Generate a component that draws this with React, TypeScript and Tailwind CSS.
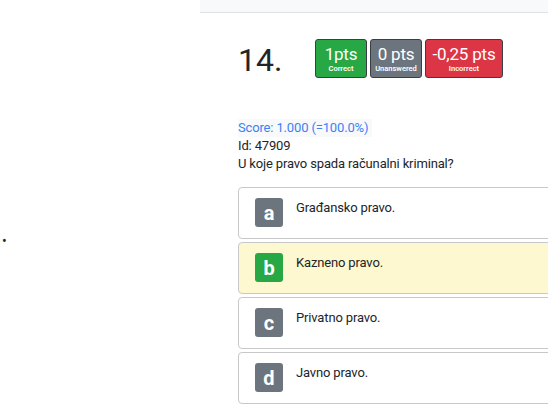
import React from 'react';

const options = [
  { letter: 'a', text: 'Građansko pravo.', correct: false },
  { letter: 'b', text: 'Kazneno pravo.', correct: true },
  { letter: 'c', text: 'Privatno pravo.', correct: false },
  { letter: 'd', text: 'Javno pravo.', correct: false },
];

const Badge = ({ value, label, className }: { value: string; label: string; className: string }) => (
  <div className={`flex flex-col items-center justify-center h-[39px] rounded-[3px] border border-[#3a3f44] text-white whitespace-nowrap ${className}`}>
    <span className="text-[17px] leading-[20px] tracking-[-0.2px]">{value}</span>
    <span className="text-[7.5px] leading-[10px] font-semibold">{label}</span>
  </div>
);

const App = () => {
  return (
    <div className="flex w-[548px] h-[417px] overflow-hidden bg-white text-[#212529]" style={{ fontFamily: 'Roboto, "Open Sans", sans-serif' }}>
      {/* Sidebar */}
      <div className="w-[200px] shrink-0 pt-[229px] pl-[2px]">
        <span className="text-[14px]">•</span>
      </div>

      {/* Main */}
      <div className="flex-1 min-w-0">
        <div className="h-[13px] bg-[#f8f9fa] border-b border-[#dee2e6]" />
        <div className="pl-[38px] pt-[26px]">
          <div className="flex items-start">
            <h1 className="w-[77px] text-[32px] leading-[40px] pt-[1px]">14.</h1>
            <div className="flex gap-[3px]">
              <Badge value="1pts" label="Correct" className="w-[52px] bg-[#28a745]" />
              <Badge value="0 pts" label="Unanswered" className="w-[52px] bg-[#6c757d]" />
              <Badge value="-0,25 pts" label="Incorrect" className="w-[78px] bg-[#dc3545]" />
            </div>
          </div>

          <div className="mt-[39px] text-[13px] leading-[18px] tracking-[-0.15px]">
            <div className="inline-block bg-[#f8f9fa] text-[#3b82f6] pr-1">Score: 1.000 (=100.0%)</div>
            <div>Id: 47909</div>
            <div>U koje pravo spada računalni kriminal?</div>
          </div>

          <div className="mt-[14px] flex flex-col gap-[3px] w-[340px]">
            {options.map((o) => (
              <div
                key={o.letter}
                className={`h-[52px] flex items-start pl-[16px] pt-[10px] border border-[#c8c8c8] rounded-[4px] ${o.correct ? 'bg-[#fdf8d0]' : 'bg-white'}`}
              >
                <div className={`w-[28px] h-[29px] rounded-[3px] flex items-center justify-center text-white font-bold text-[20px] ${o.correct ? 'bg-[#28a745]' : 'bg-[#6c757d]'}`}>
                  {o.letter}
                </div>
                <span className="ml-[13px] pt-[1px] text-[13px] leading-[18px] tracking-[-0.15px]">{o.text}</span>
              </div>
            ))}
          </div>
        </div>
      </div>
    </div>
  );
};

export default App;
